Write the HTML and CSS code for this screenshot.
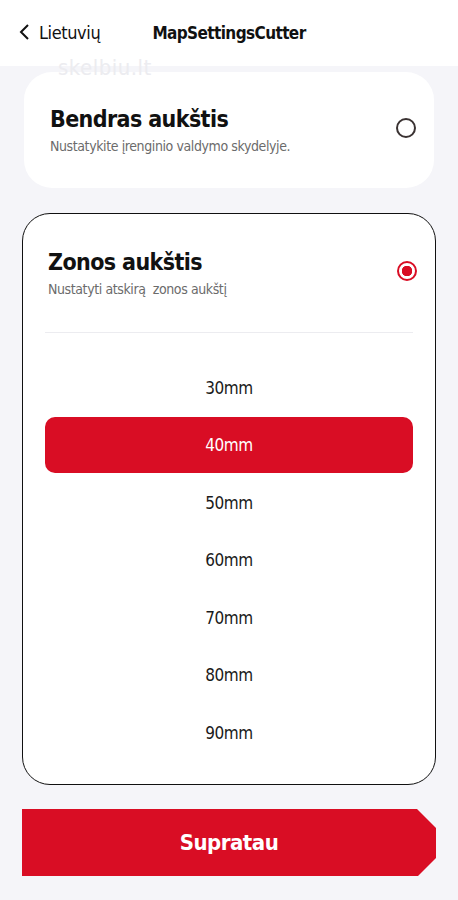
FILE: index.html
```html
<!DOCTYPE html>
<html lang="lt">
<head>
  <meta charset="UTF-8">
  <meta name="viewport" content="width=device-width, initial-scale=1.0">
  <title>MapSettingsCutter</title>
  <link rel="stylesheet" href="styles.css">
</head>
<body>
  <header class="topbar">
    <a class="back" href="#">
      <svg class="back-icon" width="12" height="18" viewBox="0 0 12 18"><path d="M10 2 L3 9 L10 16" fill="none" stroke="#111" stroke-width="2"/></svg>
      <span>Lietuvių</span>
    </a>
    <h1 class="title">MapSettingsCutter</h1>
    <div class="watermark">skelbiu.lt</div>
  </header>

  <main class="content">
    <div class="card">
      <div class="card-head">
        <div>
          <h2>Bendras aukštis</h2>
          <p>Nustatykite įrenginio valdymo skydelyje.</p>
        </div>
        <span class="radio"></span>
      </div>
    </div>

    <div class="card card-active">
      <div class="card-head">
        <div>
          <h2>Zonos aukštis</h2>
          <p>Nustatyti atskirą&nbsp; zonos aukštį</p>
        </div>
        <span class="radio radio-on"></span>
      </div>
      <div class="divider"></div>
      <ul class="options">
        <li>30mm</li>
        <li class="selected">40mm</li>
        <li>50mm</li>
        <li>60mm</li>
        <li>70mm</li>
        <li>80mm</li>
        <li>90mm</li>
      </ul>
    </div>

    <button type="button" class="ok-btn">Supratau</button>
  </main>
</body>
</html>
```

FILE: styles.css
```css
body {
  margin: 0;
  font-family: "DejaVu Sans Condensed", "DejaVu Sans", sans-serif;
  font-stretch: condensed;
  letter-spacing: -0.4px;
  background-color: #f5f5f9;
  color: #111;
}

.topbar {
  position: relative;
  height: 66px;
  background-color: #fff;
  display: flex;
  align-items: center;
  padding: 0 16px 0 18px;
  box-sizing: border-box;
}

.back {
  display: flex;
  align-items: center;
  gap: 9px;
  color: #111;
  text-decoration: none;
  font-size: 18px;
  margin-top: -2px;
}

.title {
  position: absolute;
  left: 0;
  right: 0;
  top: 23px;
  margin: 0;
  text-align: center;
  font-size: 17px;
  font-weight: bold;
  letter-spacing: -0.6px;
  pointer-events: none;
}

.watermark {
  position: absolute;
  left: 58px;
  top: 55px;
  font-family: "DejaVu Sans", sans-serif;
  font-size: 22px;
  color: #ececf0;
  letter-spacing: 0.5px;
}

.content {
  padding: 6px 22px 0;
}

.card {
  background-color: #fff;
  border-radius: 28px;
  margin: 0 2px 25px;
  padding: 32px 18px 0 26px;
  height: 116px;
  box-sizing: border-box;
}

.card-head {
  display: flex;
  justify-content: space-between;
  align-items: center;
}

.card h2 {
  margin: 0;
  font-size: 23px;
  line-height: 30px;
  letter-spacing: -0.6px;
}

.card p {
  margin: 4px 0 0;
  font-size: 14px;
  color: #6b6b6b;
}

.radio {
  width: 16px;
  height: 16px;
  border: 2.5px solid #3a3232;
  border-radius: 50%;
  margin-top: -3px;
}

.radio-on {
  border-color: #d90d24;
  background: radial-gradient(circle, #d90d24 0 5px, #fff 5.5px);
}

.card-active {
  margin: 0 0 24px;
  height: 572px;
  border: 1.5px solid #111;
  padding: 33px 0 0;
}

.card-active .card-head {
  padding: 0 18px 0 25px;
}

.divider {
  height: 1px;
  background-color: #ececf0;
  margin: 35px 22px 0;
}

.options {
  list-style: none;
  margin: 26px 22px 0;
  padding: 0;
}

.options li {
  height: 57.5px;
  display: flex;
  align-items: center;
  justify-content: center;
  font-size: 17px;
  color: #1a1a1a;
}

.options li.selected {
  height: 56px;
  background-color: #d90d24;
  color: #fff;
  border-radius: 10px;
  margin-bottom: 1.5px;
}

.ok-btn {
  display: block;
  width: 414px;
  height: 67px;
  border: none;
  background-color: #d90d24;
  color: #fff;
  font-family: inherit;
  font-size: 22px;
  font-weight: bold;
  letter-spacing: -0.5px;
  clip-path: polygon(0 0, 395px 0, 414px 19px, 414px 49px, 396px 67px, 0 67px);
  cursor: pointer;
}
```
